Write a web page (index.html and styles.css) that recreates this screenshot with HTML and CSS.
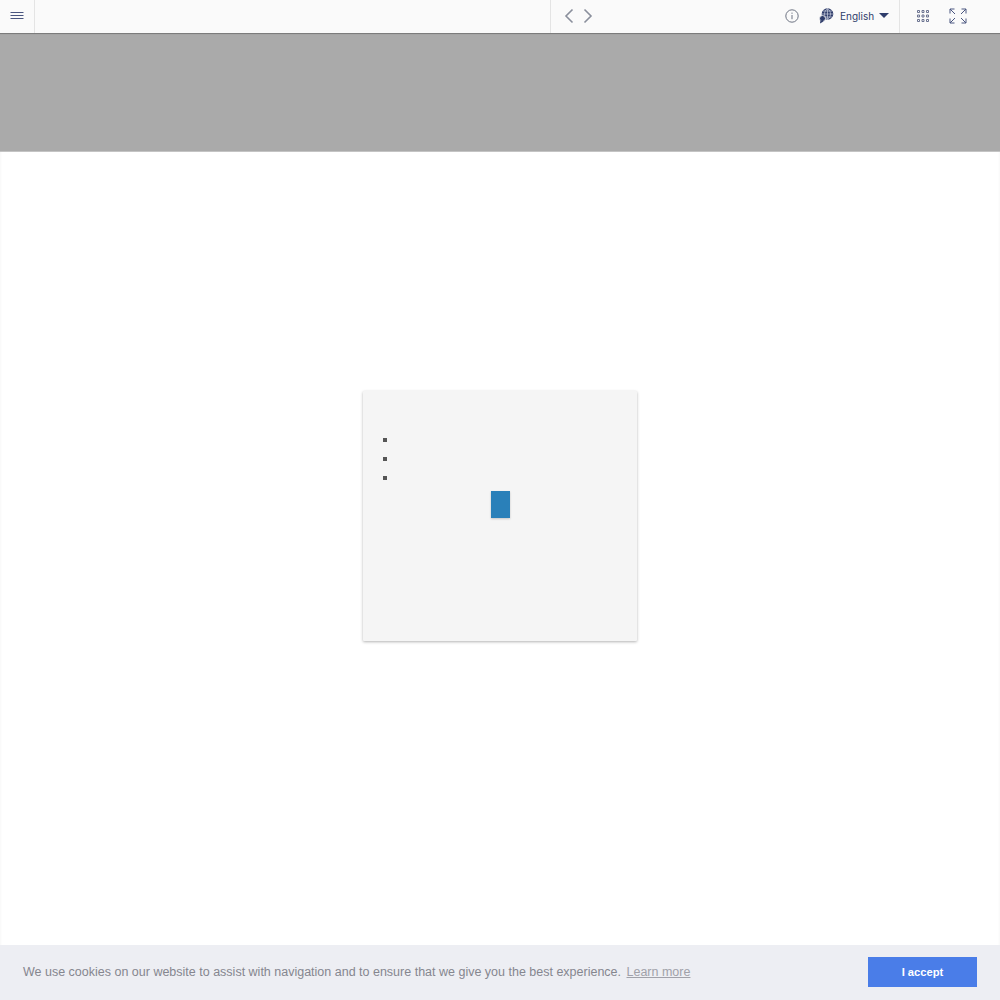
FILE: index.html
```html
<!DOCTYPE html>
<html lang="en">
<head>
    <meta charset="UTF-8">
    <meta name="viewport" content="width=device-width, initial-scale=1.0">
    <title>Reader</title>
    <link rel="stylesheet" href="styles.css">
</head>
<body>
    <!-- Toolbar -->
    <header class="toolbar">
        <button class="tool-cell menu-cell" aria-label="Menu">
            <svg width="14" height="8" viewBox="0 0 14 8" fill="none" stroke="#4a5680" stroke-width="1">
                <path d="M.5 .5h13M.5 3.500h13M.5 6.500h13"/>
            </svg>
        </button>
        <div class="toolbar-title"></div>
        <div class="toolbar-pager">
            <svg width="10" height="16" viewBox="0 0 10 16" fill="none" stroke="#8a8f9c" stroke-width="1.6">
                <path d="M8.500 1.500 2 8l6.500 6.500"/>
            </svg>
            <svg width="10" height="16" viewBox="0 0 10 16" fill="none" stroke="#8a8f9c" stroke-width="1.6">
                <path d="M1.500 1.500 8 8l-6.500 6.500"/>
            </svg>
        </div>
        <div class="toolbar-right">
            <svg class="info-icon" width="14" height="14" viewBox="0 0 14 14" fill="none" stroke="#6d7382" stroke-width="1">
                <circle cx="7" cy="7" r="6.200"/>
                <path d="M7 6v4.200M7 3.600v1.200"/>
            </svg>
            <div class="lang">
                <svg width="15" height="16" viewBox="0 0 15 16">
                    <circle cx="8.500" cy="6" r="5.800" fill="#2f3d6b"/>
                    <path d="M3 6h11M8.500 .5v11M4 3h9M4 9h9" stroke="#c9cede" stroke-width=".7" fill="none"/>
                    <path d="M8.500 .5c-4 3-4 8 0 11M8.500 .5c4 3 4 8 0 11" stroke="#c9cede" stroke-width=".7" fill="none"/>
                    <circle cx="3.500" cy="10.500" r="3" fill="#2f3d6b" stroke="#fafafa" stroke-width=".8"/>
                    <path d="M1.500 12 1 15.500l3.500-2z" fill="#2f3d6b"/>
                </svg>
                <span class="lang-name">English</span>
                <span class="caret"></span>
            </div>
        </div>
        <div class="toolbar-actions">
            <svg width="12" height="12" viewBox="0 0 12 12" fill="none" stroke="#6b7390" stroke-width="1">
                <path d="M.5.5h2v2h-2zM5 .5h2v2H5zM9.500.5h2v2h-2zM.5 5h2v2h-2zM5 5h2v2H5zM9.500 5h2v2h-2zM.5 9.500h2v2h-2zM5 9.500h2v2H5zM9.500 9.500h2v2h-2z"/>
            </svg>
            <svg width="18" height="16" viewBox="0 0 18 16" fill="none" stroke="#4a5680" stroke-width="1">
                <path d="M1 5.500V1h4.500M1 1l5 5M17 5.500V1h-4.500M17 1l-5 5M1 10.500V15h4.500M1 15l5-5M17 10.500V15h-4.500M17 15l-5-5"/>
            </svg>
        </div>
    </header>

    <div class="banner"></div>

    <main class="content">
        <div class="card">
            <ul class="card-list">
                <li></li>
                <li></li>
                <li></li>
            </ul>
            <div class="card-block"></div>
        </div>
    </main>

    <!-- Cookie bar -->
    <div class="cookie-bar">
        <p class="cookie-text">We use cookies on our website to assist with navigation and to ensure that we give you the best experience. <a href="#" class="cookie-link">Learn more</a></p>
        <button class="cookie-button">I accept</button>
    </div>
</body>
</html>
```

FILE: styles.css
```css
body {
    margin: 0;
    font-family: 'Liberation Sans', Arial, sans-serif;
    background-color: #fff;
    height: 1000px;
    overflow: hidden;
}

/* Toolbar */
.toolbar {
    display: flex;
    height: 33px;
    background-color: #fafafa;
}

.tool-cell {
    background: none;
    border: none;
    padding: 0;
    cursor: pointer;
}

.menu-cell {
    display: flex;
    align-items: center;
    justify-content: center;
    width: 35px;
    padding-bottom: 2px;
    border-right: 1px solid #e4e4e4;
    box-sizing: border-box;
}

.toolbar-title {
    width: 516px;
    border-right: 1px solid #e4e4e4;
    box-sizing: border-box;
}

.toolbar-pager {
    display: flex;
    align-items: center;
    gap: 9px;
    width: 229px;
    padding: 0 0 2px 13px;
    box-sizing: border-box;
}

.toolbar-right {
    display: flex;
    align-items: center;
    width: 120px;
    padding: 0 0 2px 5px;
    border-right: 1px solid #e4e4e4;
    box-sizing: border-box;
}

.lang {
    display: flex;
    align-items: center;
    margin-left: 20px;
}

.lang-name {
    font-family: 'Inter', sans-serif;
    font-size: 10px;
    color: #2f3d6b;
    margin-left: 6px;
    padding-top: 1px;
}

.caret {
    width: 0;
    height: 0;
    margin-left: 5px;
    border-left: 5px solid transparent;
    border-right: 5px solid transparent;
    border-top: 5px solid #2f3d6b;
}

.toolbar-actions {
    display: flex;
    align-items: center;
    gap: 20px;
    padding: 0 0 2px 17px;
    box-sizing: border-box;
}

.banner {
    height: 119px;
    background-color: #aaa;
    box-shadow: inset 0 2px 1px -1px rgba(0, 0, 0, 0.3);
    border-bottom: 1px solid #c4c4c4;
    box-sizing: border-box;
}

.content {
    display: flex;
    justify-content: center;
    height: 848px;
    padding-top: 239px;
    box-sizing: border-box;
    box-shadow: inset 2px 0 2px -1px rgba(0, 0, 0, 0.03), inset -2px 0 2px -1px rgba(0, 0, 0, 0.03);
}

.card {
    width: 274px;
    height: 250px;
    background-color: #f5f5f5;
    box-shadow: 0 1px 3px rgba(0, 0, 0, 0.3);
    border-radius: 1px;
    box-sizing: border-box;
    padding-top: 39px;
}

.card-list {
    list-style: square;
    margin: 0;
    padding-left: 35px;
    color: #555;
    font-size: 14px;
    line-height: 19.200px;
}

.card-list li {
    height: 19.200px;
}

.card-block {
    width: 19px;
    height: 27px;
    margin: 3px auto 0;
    background-color: #2a80b9;
    box-shadow: 0 1px 2px rgba(0, 0, 0, 0.2);
}

/* Cookie bar */
.cookie-bar {
    position: fixed;
    left: 0;
    right: 0;
    bottom: 0;
    height: 55px;
    display: flex;
    align-items: center;
    justify-content: space-between;
    padding: 0 23px 2px 23px;
    background-color: #edeef3;
    box-sizing: border-box;
}

.cookie-text {
    margin: 0;
    font-size: 12.500px;
    color: #85868f;
}

.cookie-link {
    color: #a0a1a9;
    margin-left: 2px;
}

.cookie-button {
    width: 109px;
    height: 30px;
    border: none;
    background-color: #4a7de8;
    color: #fff;
    font-family: 'Liberation Sans', Arial, sans-serif;
    font-size: 11.200px;
    font-weight: bold;
    cursor: pointer;
}
```
